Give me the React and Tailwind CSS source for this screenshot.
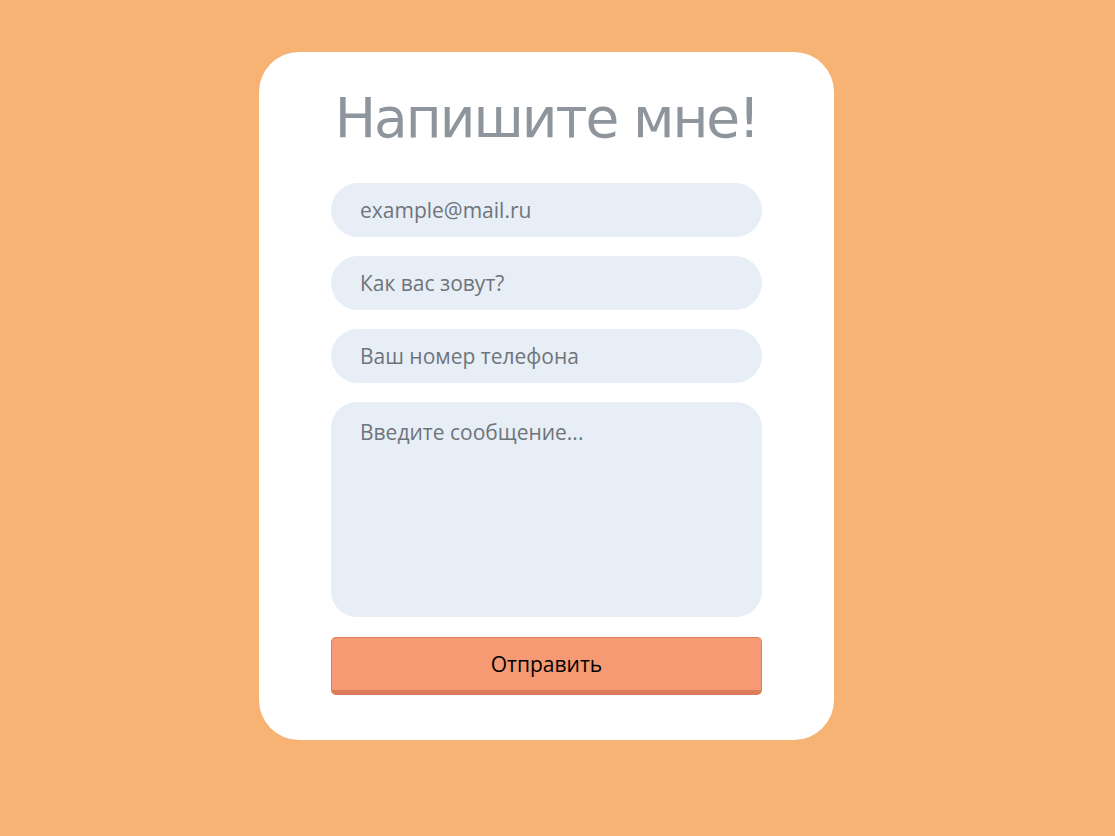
import React from 'react';

const ContactForm = () => {
    const fieldClass =
        "w-full h-[54px] rounded-full bg-[#e7eef6] px-[29px] text-[21px] text-[#374151] placeholder:text-[#6f747b] outline-none";

    return (
        <div className="min-h-[836px] w-full bg-[#f7b374] flex justify-center pt-[52px] pr-[22px] font-['Open_Sans','Noto_Sans',sans-serif]">
            {/* card */}
            <div className="w-[575px] h-[688px] bg-white rounded-[40px] flex flex-col items-center">
                <h1 className="mt-[28px] h-[76px] text-[55px] leading-[76px] text-[#8e959c] font-['Comic_Sans_MS','DejaVu_Sans',sans-serif] tracking-[-2px]">
                    Напишите мне!
                </h1>

                <form className="mt-[27px] w-[431px] flex flex-col gap-[19px]" onSubmit={(e) => e.preventDefault()}>
                    <input type="email" placeholder="example@mail.ru" className={fieldClass} />
                    <input type="text" placeholder="Как вас зовут?" className={fieldClass} />
                    <input type="tel" placeholder="Ваш номер телефона" className={fieldClass} />
                    <textarea
                        placeholder="Введите сообщение..."
                        className="w-full h-[215px] resize-none rounded-[26px] bg-[#e7eef6] px-[29px] pt-[15px] text-[21px] text-[#374151] placeholder:text-[#6f747b] outline-none"
                    />
                    <button
                        type="submit"
                        className="mt-[1px] w-full h-[58px] rounded-[5px] bg-[#f59a72] border border-[#d9805b] border-b-[5px] border-b-[#dc7c58] text-[21px] text-black pt-[2px]"
                    >
                        Отправить
                    </button>
                </form>
            </div>
        </div>
    );
};

export default function App() {
    return <ContactForm />;
}
